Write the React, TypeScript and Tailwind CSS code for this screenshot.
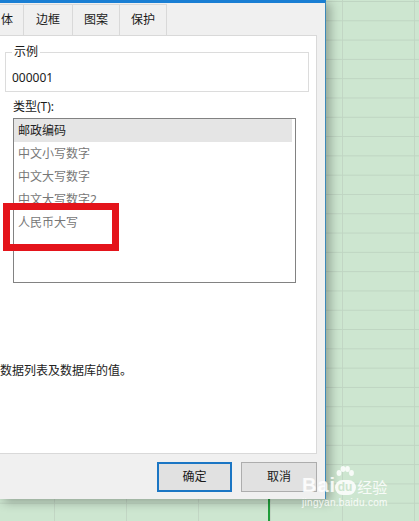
import React from 'react';

const font = "font-['Noto_Sans','Noto_Sans_CJK_SC',sans-serif]";

const tabs = [
  { label: '体', w: 'w-[24px] justify-start pl-[1px]' },
  { label: '边框', w: 'w-[49px] justify-center' },
  { label: '图案', w: 'w-[47px] justify-center' },
  { label: '保护', w: 'w-[47px] justify-center' },
];

const types = ['邮政编码', '中文小写数字', '中文大写数字', '中文大写数字2', '人民币大写'];

function Watermark() {
  return (
    <div className="absolute left-[302px] top-[465px] text-white/85 select-none">
      <div className="flex items-end">
        <span className="text-[20px] font-bold leading-[19px] font-['Liberation_Sans',sans-serif] tracking-[1px]">Bai</span>
        <div className="relative flex flex-col items-center w-[22px] ml-[-2px]">
          <svg width="20" height="15" viewBox="0 0 20 15" className="fill-white/85">
            <ellipse cx="4" cy="8" rx="2.4" ry="3" />
            <ellipse cx="8" cy="4" rx="2.4" ry="3" />
            <ellipse cx="12.5" cy="4" rx="2.4" ry="3" />
            <ellipse cx="16.5" cy="8" rx="2.4" ry="3" />
          </svg>
          <span className="w-[21px] h-[15px] rounded-full bg-white/85 text-[#cde5cf] text-[12px] font-bold leading-[15px] text-center font-['Liberation_Sans',sans-serif]">du</span>
        </div>
        <span className="text-[15px] leading-[16px] ml-[1px] font-['Noto_Sans_CJK_SC',sans-serif]">经验</span>
      </div>
      <div className="text-[10px] leading-[12px] mt-[2px] tracking-[0.3px] font-['Liberation_Sans',sans-serif]">jingyan.baidu.com</div>
    </div>
  );
}

export default function App() {
  return (
    <div
      className={`relative w-[419px] h-[521px] overflow-hidden bg-[#cde6d0] bg-[linear-gradient(#bfd5c2_1px,transparent_1px),linear-gradient(90deg,#c2d6c4_1px,transparent_1px)] bg-[length:72px_19.3px] bg-[position:54px_1px] ${font}`}
    >
      {/* selected cell edge */}
      <div className="absolute left-[268px] top-[498px] w-[2px] h-[23px] bg-[#1f9d3a]" />

      {/* dialog */}
      <div className="relative w-[326px] h-[499px] bg-[#f0f0f0] border-t-[3px] border-[#1a7fd4] border-r border-r-[#3d88b8] shadow-[4px_3px_10px_rgba(0,0,0,0.3)] flex flex-col">
        {/* tabs */}
        <div className="flex mt-[1px] h-[31px] text-[12px] text-[#1a1a1a]">
          {tabs.map((t) => (
            <div
              key={t.label}
              className={`${t.w} h-full flex items-center border-t border-r border-[#d9d9d9] bg-[#f0f0f0]`}
            >
              {t.label}
            </div>
          ))}
        </div>

        {/* tab panel */}
        <div className="relative ml-[-1px] w-[318px] h-[419px] bg-white border border-[#d9d9d9] text-[12px] text-[#1a1a1a]">
          <fieldset className="ml-[5px] mt-[7px] w-[304px] border border-[#dcdcdc] px-[6px] pb-[4px]">
            <legend className="px-[2px] leading-[18px]">示例</legend>
            <div className="mt-[8px] leading-[18px]">000001</div>
          </fieldset>

          <div className="ml-[13px] mt-[6px] leading-[18px]">类型(T):</div>

          <div className="ml-[13px] mt-[2px] w-[283px] h-[165px] border border-[#828282] flex flex-col">
            {types.map((t, i) => (
              <div
                key={t}
                className={`h-[23px] leading-[23px] pl-[4px] mr-[3px] ${
                  i === 0 ? 'bg-[#e5e5e5] text-[#222]' : 'text-[#777]'
                }`}
              >
                {t}
              </div>
            ))}
          </div>

          <div className="mt-[79px] leading-[18px] text-[#222]">数据列表及数据库的值。</div>

          {/* annotation box */}
          <div className="absolute left-[3px] top-[167px] w-[116px] h-[48px] border-[7px] border-[#e4141b]" />
        </div>

        {/* buttons */}
        <div className="flex justify-end gap-[9px] pr-[8px] mt-[8px] text-[12px] text-[#1a1a1a]">
          <button className="w-[75px] h-[30px] bg-[#e1e1e1] border-2 border-[#1b76c4]">确定</button>
          <button className="w-[76px] h-[30px] bg-[#e1e1e1] border border-[#adadad]">取消</button>
        </div>
      </div>

      <Watermark />
    </div>
  );
}
